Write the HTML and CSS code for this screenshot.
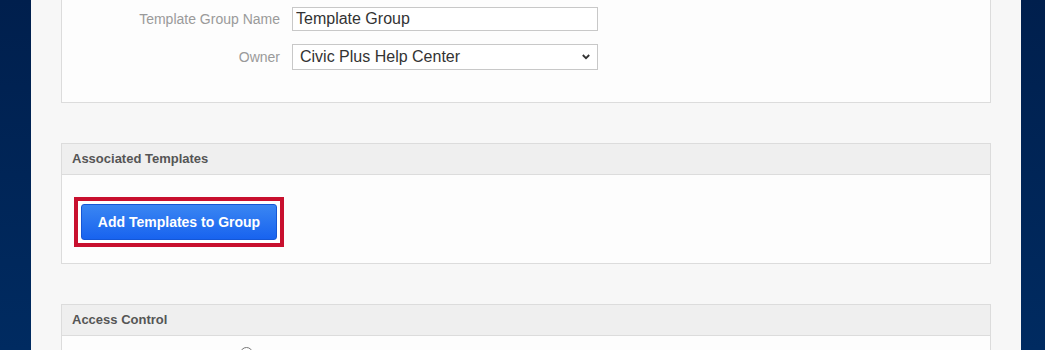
FILE: index.html
```html
<!DOCTYPE html>
<html>
<head>
<meta charset="utf-8">
<link rel="stylesheet" href="styles.css">
</head>
<body>
<div class="frame">
  <div class="side"></div>
  <main class="main">
    <section class="panel panel-first">
      <div class="panel-body form-body">
        <div class="row">
          <label class="lbl">Template Group Name</label>
          <input class="txt" type="text" value="Template Group">
        </div>
        <div class="row">
          <label class="lbl">Owner</label>
          <div class="sel">
            <span>Civic Plus Help Center</span>
            <svg class="chev" width="8" height="6" viewBox="0 0 8 6"><path d="M0.8 1 L4 4.2 L7.2 1" fill="none" stroke="#333" stroke-width="1.8"/></svg>
          </div>
        </div>
      </div>
    </section>

    <section class="panel">
      <header class="panel-head">Associated Templates</header>
      <div class="panel-body btn-body">
        <div class="highlight">
          <button class="btn">Add Templates to Group</button>
        </div>
      </div>
    </section>

    <section class="panel">
      <header class="panel-head">Access Control</header>
      <div class="panel-body access-body">
        <span class="radio"></span>
      </div>
    </section>
  </main>
  <div class="side side-right"></div>
</div>
</body>
</html>
```

FILE: styles.css
```css
* { box-sizing: border-box; }
html, body { margin: 0; padding: 0; }
body {
  font-family: "Liberation Sans", Arial, sans-serif;
  width: 1045px;
  height: 350px;
  overflow: hidden;
}
.frame {
  display: flex;
  height: 350px;
}
.side {
  width: 31px;
  flex: none;
  background: linear-gradient(#001f4d, #002b61);
}
.side-right { width: 24px; }
.main {
  flex: none;
  width: 990px;
  background: #f7f7f7;
  padding: 0 30px;
  display: flex;
  flex-direction: column;
  gap: 40px;
  overflow: hidden;
}
.panel {
  border: 1px solid #dcdcdc;
  background: #fdfdfd;
  flex: none;
}
.panel-first { border-top: none; }
.panel-head {
  height: 31px;
  background: #efefef;
  border-bottom: 1px solid #dcdcdc;
  padding: 0 10px;
  font-size: 13px;
  font-weight: bold;
  color: #555;
  line-height: 30px;
}
.form-body {
  padding: 7px 0 32px;
  display: flex;
  flex-direction: column;
  gap: 13px;
}
.row {
  display: flex;
  align-items: center;
  gap: 12px;
}
.lbl {
  width: 218px;
  text-align: right;
  font-size: 14px;
  color: #9a9a9a;
}
.txt {
  width: 306px;
  height: 24px;
  border: 1px solid #c8c8c8;
  padding: 0 3px;
  font-family: "Liberation Sans", Arial, sans-serif;
  font-size: 16px;
  color: #333;
  background: #fff;
  margin: 0;
}
.sel {
  width: 306px;
  height: 26px;
  border: 1px solid #c8c8c8;
  background: #fff;
  display: flex;
  align-items: center;
  justify-content: space-between;
  padding: 0 7px 0 7px;
  font-size: 16px;
  color: #333;
}
.chev { display: block; }
.btn-body {
  padding: 22px 0 16px 12px;
}
.highlight {
  display: inline-block;
  border: 4px solid #c8102e;
  padding: 3px;
  background: #fff;
}
.btn {
  display: block;
  width: 196px;
  height: 36px;
  border: 1px solid #1557d6;
  border-radius: 3px;
  background: linear-gradient(#3a86f2, #1863ef);
  color: #fff;
  font-family: "Liberation Sans", Arial, sans-serif;
  font-size: 14px;
  font-weight: bold;
  padding: 0;
}
.access-body {
  height: 60px;
  padding: 11px 0 0 178px;
}
.radio {
  display: block;
  width: 13px;
  height: 13px;
  border: 1px solid #777;
  border-radius: 50%;
  background: #fff;
}
```
